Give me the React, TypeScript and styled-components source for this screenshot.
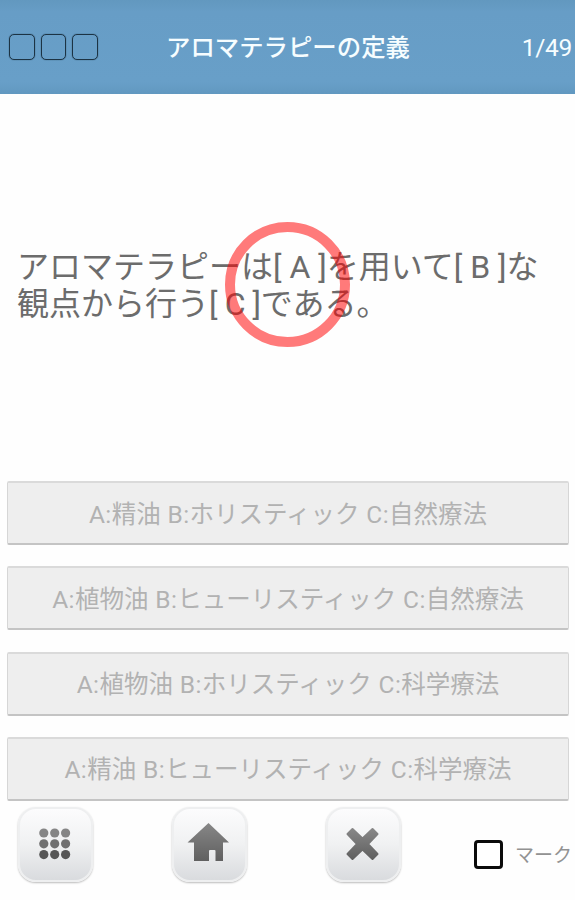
import React from "react";
import styled, { createGlobalStyle } from "styled-components";

const GlobalStyle = createGlobalStyle`
  *, *::before, *::after { box-sizing: border-box; }
  body { margin: 0; background: #fefefe; }
  button { font: inherit; }
`;

const Screen = styled.main`
  width: 575px;
  height: 900px;
  display: flex;
  flex-direction: column;
  overflow: hidden;
  background: #fefefe;
  font-family: Roboto, "Noto Sans CJK JP", sans-serif;
`;

const Header = styled.header`
  height: 94px;
  flex: none;
  display: grid;
  grid-template-columns: 166px 1fr auto;
  align-items: center;
  padding-right: 3px;
  background: linear-gradient(#6298bf 0, #679dc6 12px, #689fc8 82px, #6198c0 100%);
  color: #f6fdff;
  white-space: nowrap;
`;

const Results = styled.div`
  display: flex;
  gap: 6px;
  padding-left: 9px;
`;

const ResultBox = styled.span`
  width: 25.5px;
  height: 26px;
  border: 1.5px solid #1c3344;
  border-radius: 5px;
  box-shadow: 0 0 1px #1c3344;
`;

const Title = styled.h1`
  margin: 0;
  padding-top: 2px;
  font-size: 24.4px;
  line-height: 36px;
  font-weight: 500;
`;

const Counter = styled.span`
  padding-top: 2px;
  font-size: 24.5px;
  line-height: 36px;
  letter-spacing: -0.3px;
`;

const QuestionArea = styled.section`
  position: relative;
  height: 387px;
  flex: none;
  padding: 155px 17px 0;
`;

const Question = styled.p`
  margin: 0;
  font-size: 32px;
  line-height: 37px;
  font-weight: 400;
  color: #6c6c6c;
  white-space: nowrap;
`;

const Latin = styled.span<{ $spacing: number }>`
  letter-spacing: ${(p) => p.$spacing}px;
`;

const Ring = styled.div`
  position: absolute;
  left: 225px;
  top: 128px;
  width: 125px;
  height: 125px;
  border: 10px solid rgba(255, 0, 0, 0.52);
  border-radius: 50%;
`;

const Options = styled.div`
  display: flex;
  flex-direction: column;
  gap: 21.3px;
  padding: 0 6px 0 7px;
`;

const Option = styled.button`
  height: 64px;
  padding: 3px 0 0;
  border: 1px solid #d6d6d6;
  border-top: 2px solid #dadada;
  border-bottom: 2px solid #c4c4c4;
  border-radius: 2px;
  background: #eee;
  color: #b2b2b2;
  font-size: 24.5px;
  font-weight: 400;
  line-height: 36px;
  white-space: nowrap;
`;

const Footer = styled.footer`
  display: flex;
  align-items: flex-start;
  padding: 6px 3px 0 18px;
`;

const Tools = styled.nav`
  display: flex;
  gap: 79px;
`;

const ToolButton = styled.button`
  width: 75px;
  height: 75px;
  display: grid;
  place-items: center;
  padding: 0;
  border: 2px solid #eeeff0;
  border-radius: 18px;
  background: linear-gradient(#fcfcfd, #f0f1f2 50%, #d9dbde);
  box-shadow: 0 1px 2px #bbb;
`;

const MarkLabel = styled.label`
  display: flex;
  align-items: center;
  margin: 31px 0 0 auto;
  gap: 12px;
  color: #929292;
  font-size: 19px;
  line-height: 30px;
  white-space: nowrap;
`;

const MarkText = styled.span`
  padding-top: 3px;
`;

const CheckBox = styled.span`
  width: 29px;
  height: 29px;
  border: 3px solid #0b0b0b;
  border-radius: 4px;
  background: #fff;
`;

const options = [
  "A:精油 B:ホリスティック C:自然療法",
  "A:植物油 B:ヒューリスティック C:自然療法",
  "A:植物油 B:ホリスティック C:科学療法",
  "A:精油 B:ヒューリスティック C:科学療法",
];

// Sets the Latin runs of a mixed string with their own tracking.
const MixedText = ({ text, spacing }: { text: string; spacing: number }) => (
  <span>
    {text.split(/([ -~]+)/).map((part, i) =>
      i % 2 ? (
        <Latin key={i} $spacing={spacing}>{part}</Latin>
      ) : (
        part
      )
    )}
  </span>
);

const IconFill = ({ id }: { id: string }) => (
  <defs>
    <linearGradient id={id} x1="0" y1="0" x2="0" y2="1">
      <stop offset="0" stopColor="#878787" />
      <stop offset="1" stopColor="#606060" />
    </linearGradient>
  </defs>
);

const GridIcon = () => (
  <svg width="71" height="71" viewBox="0 0 71 71">
    {[24, 34.8, 45.6].map((y, row) =>
      [23.8, 34.7, 45.6].map((x) => (
        <circle key={`${x}-${y}`} cx={x} cy={y} r="4.6" fill={["#858585", "#707070", "#565656"][row]} />
      ))
    )}
  </svg>
);

const HomeIcon = () => (
  <svg width="71" height="71" viewBox="0 0 71 71">
    <IconFill id="home-fill" />
    <path d="M34.5 14 L55 33.5 H49 V52 H41.5 V42 Q41.5 41 40.5 41 H36 Q35 41 35 42 V52 H20 V33.5 H13.5 Z" fill="url(#home-fill)" />
  </svg>
);

const CloseIcon = () => (
  <svg width="71" height="71" viewBox="0 0 71 71">
    <IconFill id="close-fill" />
    <path
      d="M24.5 20 L34.5 29.5 L44.5 20 L49.5 25 L40 35 L49.5 45 L44.5 50 L34.5 40.5 L24.5 50 L19.5 45 L29 35 L19.5 25 Z"
      fill="url(#close-fill)"
      stroke="url(#close-fill)"
      strokeWidth="2"
      strokeLinejoin="round"
    />
  </svg>
);

export default function App() {
  return (
    <Screen>
      <GlobalStyle />
      <Header>
        <Results>
          <ResultBox />
          <ResultBox />
          <ResultBox />
        </Results>
        <Title>アロマテラピーの定義</Title>
        <Counter>1/49</Counter>
      </Header>
      <QuestionArea>
        <Question>
          <MixedText text="アロマテラピーは[ A ]を用いて[ B ]な" spacing={0} />
          <br />
          <MixedText text="観点から行う[ C ]である。" spacing={-0.4} />
        </Question>
        <Ring />
      </QuestionArea>
      <Options>
        {options.map((text) => (
          <Option key={text}>
            <MixedText text={text} spacing={0.5} />
          </Option>
        ))}
      </Options>
      <Footer>
        <Tools>
          <ToolButton aria-label="一覧"><GridIcon /></ToolButton>
          <ToolButton aria-label="ホーム"><HomeIcon /></ToolButton>
          <ToolButton aria-label="閉じる"><CloseIcon /></ToolButton>
        </Tools>
        <MarkLabel>
          <CheckBox />
          <MarkText>マーク</MarkText>
        </MarkLabel>
      </Footer>
    </Screen>
  );
}
